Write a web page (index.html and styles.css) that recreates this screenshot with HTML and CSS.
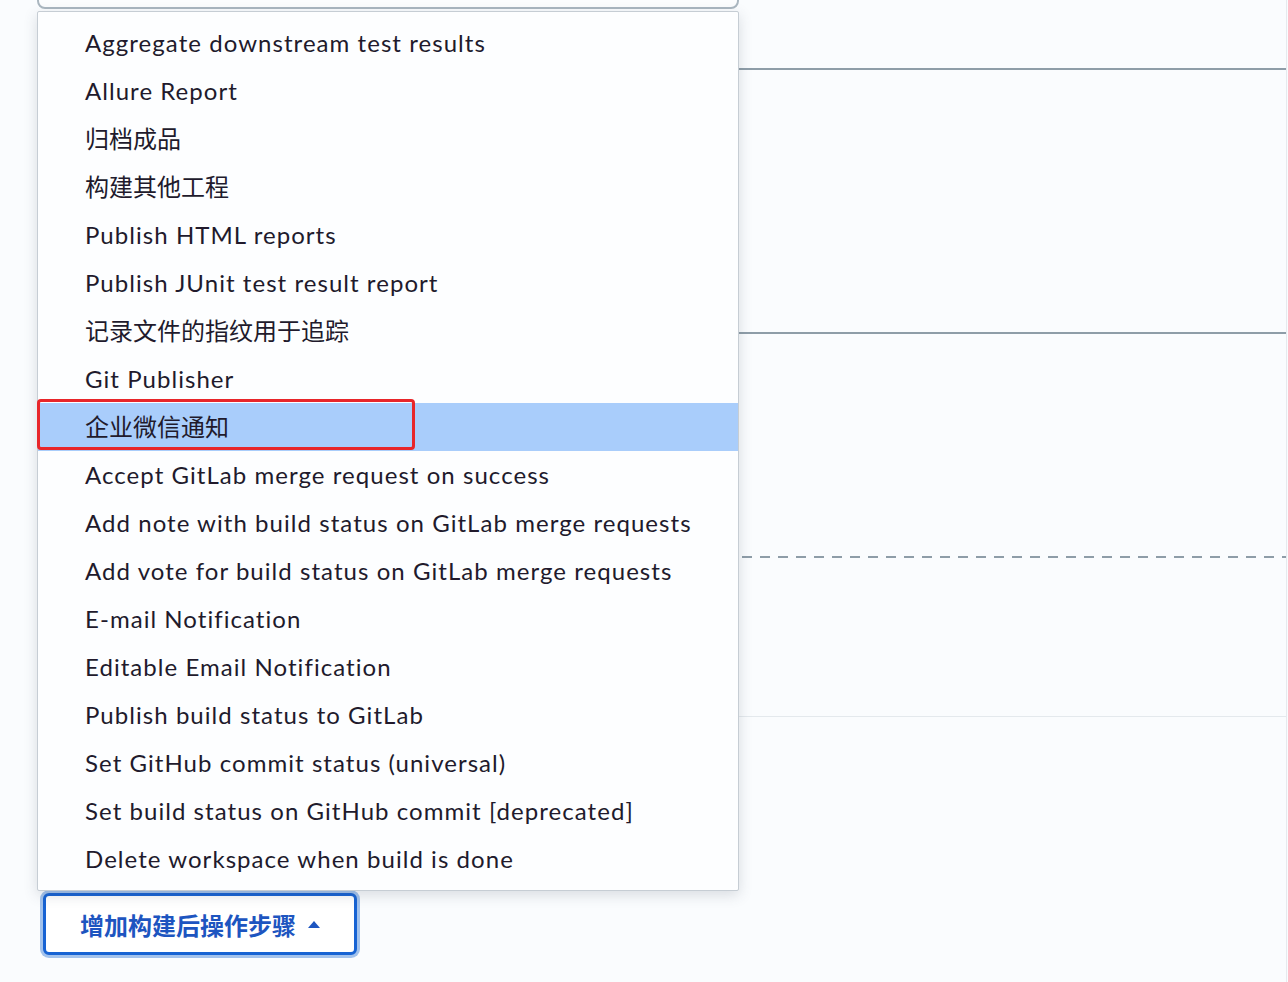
FILE: index.html
```html
<!DOCTYPE html>
<html lang="zh-CN">
<head>
    <meta charset="UTF-8">
    <title>构建后操作</title>
    <link rel="stylesheet" href="styles.css">
</head>
<body>

    <div class="page">
        <div class="field-top"></div>
        <div class="sec sec-a"></div>
        <div class="sec sec-b"></div>
        <div class="sec sec-c"></div>
        <div class="dash-line"></div>
        <div class="sec sec-d"></div>

        <div class="actions">
            <ul class="menu">
                <li>Aggregate downstream test results</li>
                <li>Allure Report</li>
                <li class="cjk">归档成品</li>
                <li class="cjk">构建其他工程</li>
                <li>Publish HTML reports</li>
                <li>Publish JUnit test result report</li>
                <li class="cjk">记录文件的指纹用于追踪</li>
                <li>Git Publisher</li>
                <li class="cjk active">企业微信通知<span class="mark"></span></li>
                <li>Accept GitLab merge request on success</li>
                <li>Add note with build status on GitLab merge requests</li>
                <li>Add vote for build status on GitLab merge requests</li>
                <li>E-mail Notification</li>
                <li>Editable Email Notification</li>
                <li>Publish build status to GitLab</li>
                <li>Set GitHub commit status (universal)</li>
                <li>Set build status on GitHub commit [deprecated]</li>
                <li>Delete workspace when build is done</li>
            </ul>
            <button class="add-btn">增加构建后操作步骤 <span class="caret"></span></button>
        </div>
    </div>

</body>
</html>
```

FILE: styles.css
```css
* {
    margin: 0;
    padding: 0;
    box-sizing: border-box;
}

body, html {
    width: 100%;
    height: 100%;
    overflow: hidden;
}

body {
    background-color: #fafcfe;
    font-family: Lato, "Noto Sans CJK SC", sans-serif;
}

.page {
    display: flow-root;
    width: 1287px;
    height: 982px;
    border-right: 1px solid #e6eaee;
}

.field-top {
    margin: -40px 0 0 37px;
    width: 702px;
    height: 49px;
    border: 2px solid #abb7c0;
    border-radius: 8px;
    background-color: #fcfdfe;
}

.sec {
    margin-left: 40px;
    border-bottom: 2px solid #8e9da8;
}

.sec-a {
    height: 61px;
}

.sec-b {
    height: 264px;
}

.sec-c {
    height: 222px;
    border-bottom: none;
}

.dash-line {
    margin-left: 40px;
    height: 2px;
    background-image: repeating-linear-gradient(to right, #8e9da8 0 10px, transparent 10px 18px);
}

.sec-d {
    height: 159px;
    border-bottom: 1px solid #e4e9ed;
}

.actions {
    position: relative;
    margin-top: 176px;
    padding-left: 43px;
}

.menu {
    position: absolute;
    left: 37px;
    bottom: calc(100% + 2px);
    width: 702px;
    padding: 7px 0;
    list-style: none;
    background-color: #fdfeff;
    border: 1px solid #c6cdd4;
    border-radius: 2px;
    box-shadow: 0 4px 14px rgba(60, 70, 90, 0.18);
    z-index: 10;
}

.menu li {
    position: relative;
    height: 48px;
    line-height: 48px;
    padding-left: 47px;
    font-size: 24px;
    letter-spacing: 1.05px;
    color: #211a2c;
    white-space: nowrap;
}

.menu li.cjk {
    font-size: 24px;
    letter-spacing: 0;
}

.menu li.active {
    background-color: #a9cdfb;
}

.mark {
    position: absolute;
    left: -1px;
    top: -4px;
    width: 378px;
    height: 51px;
    border: 3px solid #e8262a;
    border-radius: 4px;
}

.add-btn {
    display: flex;
    align-items: center;
    gap: 12px;
    width: 314px;
    height: 62px;
    padding-left: 34px;
    background-color: #ffffff;
    border: 3px solid #1763d3;
    border-radius: 6px;
    box-shadow: 0 0 0 3px rgba(90, 145, 220, 0.55);
    color: #1d55c0;
    font-family: "Noto Sans CJK SC", sans-serif;
    font-size: 24px;
    font-weight: bold;
    cursor: pointer;
}

.caret {
    width: 0;
    height: 0;
    border-left: 6px solid transparent;
    border-right: 6px solid transparent;
    border-bottom: 7px solid #1d55c0;
}
```
